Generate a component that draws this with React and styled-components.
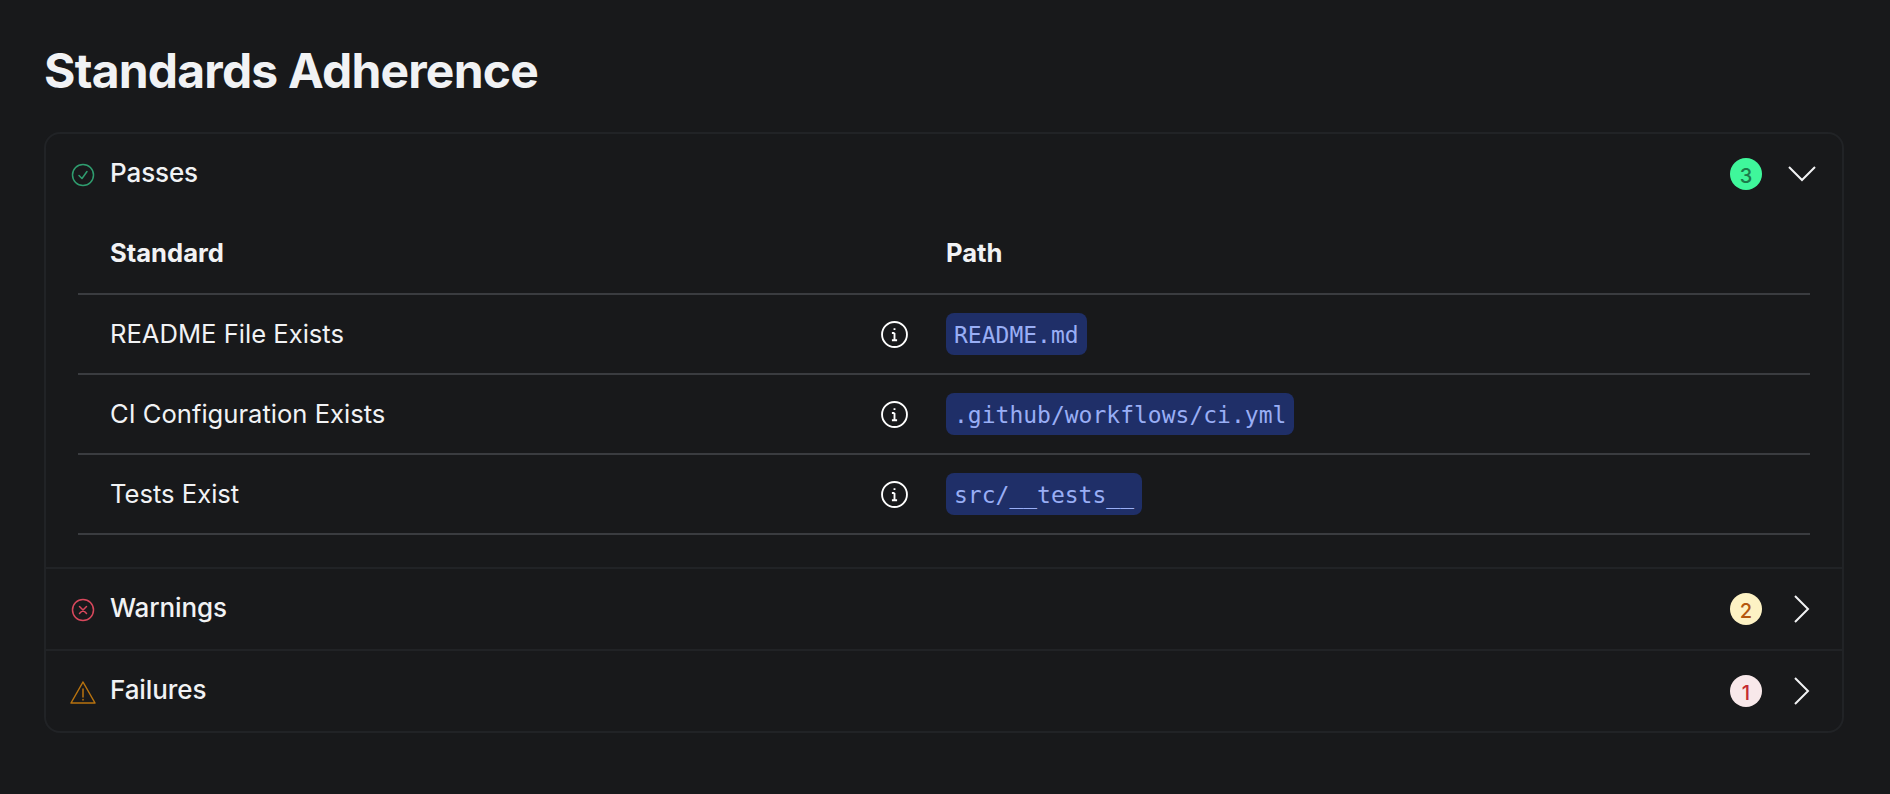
import styled, { createGlobalStyle } from "styled-components";

const GlobalStyle = createGlobalStyle`
  html, body {
    margin: 0;
    background-color: #18191b;
  }
  body {
    font-family: Inter, "Liberation Sans", sans-serif;
    color: #f1f2f4;
  }
`;

const Page = styled.div`
  box-sizing: border-box;
  height: 794px;
  padding: 46px 46px 0 44px;
  overflow: hidden;
`;

const Title = styled.h1`
  margin: 0 0 36px;
  font-size: 48px;
  line-height: 50px;
  font-weight: 700;
  letter-spacing: -0.8px;
  color: #f1f2f4;
`;

const Card = styled.div`
  border: 2px solid #212326;
  border-radius: 16px;
`;

const Section = styled.div`
  & + & {
    border-top: 2px solid #212326;
  }
`;

const Header = styled.div`
  display: flex;
  align-items: center;
  height: 80px;
  padding: 0 24px;
`;

const StatusIcon = styled.svg`
  flex: none;
  width: 26px;
  height: 26px;
  margin: 2px 14px 0 0;
  fill: none;
  stroke: ${(p) => p.$color};
  stroke-width: 1.5;
  stroke-linecap: round;
  stroke-linejoin: round;
`;

const Label = styled.span`
  flex: 1;
  margin-bottom: 2px;
  font-size: 26px;
  font-weight: 500;
  line-height: 32px;
  letter-spacing: -0.1px;
`;

const Badge = styled.span`
  box-sizing: border-box;
  display: flex;
  align-items: center;
  justify-content: center;
  width: 32px;
  height: 32px;
  margin-right: 26px;
  padding-top: 3px;
  border-radius: 50%;
  font-size: 20px;
  font-weight: 500;
  background-color: ${(p) => p.$bg};
  color: ${(p) => p.$color};
`;

const Chevron = styled.svg`
  flex: none;
  width: 28px;
  height: 28px;
  margin-right: 2px;
  fill: none;
  stroke: #f1f2f4;
  stroke-width: 2;
`;

const Table = styled.div`
  margin: 0 32px 32px 32px;
`;

const Row = styled.div`
  display: grid;
  grid-template-columns: 800px 68px 1fr;
  align-items: center;
  height: ${(p) => (p.$head ? 79 : 78)}px;
  border-bottom: 2px solid #3a3c40;
  font-size: 25.6px;
`;

const Cell = styled.div`
  padding-left: 32px;
  margin-top: -2px;
  font-weight: ${(p) => (p.$head ? 700 : 400)};
`;

const HeadCell = styled.div`
  margin-top: -2px;
  font-weight: 700;
`;

const InfoIcon = styled.svg`
  width: 27px;
  height: 27px;
  justify-self: start;
  margin-left: 3px;
  fill: none;
  stroke: #fff;
  stroke-width: 1.8;
`;

const Code = styled.code`
  display: inline-block;
  height: 42px;
  padding: 0 8px;
  border-radius: 8px;
  background-color: #1f2f68;
  color: #99aef5;
  font-family: "DejaVu Sans Mono", "Liberation Mono", monospace;
  font-size: 23px;
  line-height: 44px;
`;

const standards = [
  { name: "README File Exists", path: "README.md" },
  { name: "CI Configuration Exists", path: ".github/workflows/ci.yml" },
  { name: "Tests Exist", path: "src/__tests__" },
];

const App = () => {
  return (
    <Page>
      <GlobalStyle />
      <Title>Standards Adherence</Title>
      <Card>
        <Section>
          <Header>
            <StatusIcon viewBox="0 0 26 26" $color="#2f9d6f">
              <circle cx="13" cy="13" r="10.5" />
              <path d="M9 13.5l3 3 5-7" />
            </StatusIcon>
            <Label>Passes</Label>
            <Badge $bg="#3ff79b" $color="#1c7a4a">3</Badge>
            <Chevron viewBox="0 0 28 28"><path d="M1 7l13 13L27 7" /></Chevron>
          </Header>
          <Table>
            <Row $head>
              <Cell $head>Standard</Cell>
              <span />
              <HeadCell>Path</HeadCell>
            </Row>
            {standards.map((item) => (
              <Row key={item.path}>
                <Cell>{item.name}</Cell>
                <InfoIcon viewBox="0 0 26 26">
                  <circle cx="13" cy="13" r="12" />
                  <path d="M13 11.5v7M10.5 11.5H13M10.5 18.5h5M13 7v1.6" />
                </InfoIcon>
                <div><Code>{item.path}</Code></div>
              </Row>
            ))}
          </Table>
        </Section>
        <Section>
          <Header>
            <StatusIcon viewBox="0 0 26 26" $color="#d8485c">
              <circle cx="13" cy="13" r="10.5" />
              <path d="M9.5 9.5l7 7M16.5 9.5l-7 7" />
            </StatusIcon>
            <Label>Warnings</Label>
            <Badge $bg="#fdf2c4" $color="#b4570f">2</Badge>
            <Chevron viewBox="0 0 28 28"><path d="M7 1l13 13L7 27" /></Chevron>
          </Header>
        </Section>
        <Section>
          <Header>
            <StatusIcon viewBox="0 0 26 26" $color="#b8730f">
              <path d="M13 3L1 24h24zM13 10v8M13 20.5v.5" />
            </StatusIcon>
            <Label>Failures</Label>
            <Badge $bg="#f8e8ea" $color="#c42b32">1</Badge>
            <Chevron viewBox="0 0 28 28"><path d="M7 1l13 13L7 27" /></Chevron>
          </Header>
        </Section>
      </Card>
    </Page>
  );
};

export default App;
